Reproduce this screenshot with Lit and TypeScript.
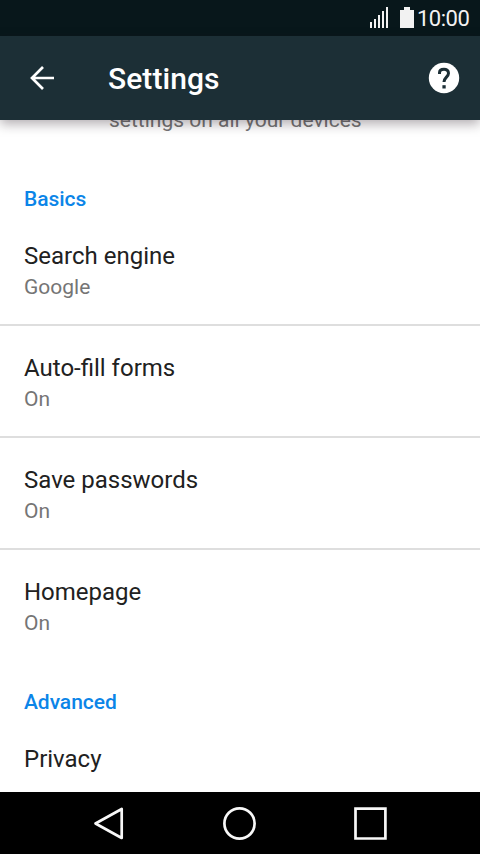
import { LitElement, html, css } from "lit";
import { customElement } from "lit/decorators.js";

interface Entry { title: string; value?: string }

@customElement("app-root")
export class AppRoot extends LitElement {
  static styles = css`
    :host { display: flex; flex-direction: column; width: 480px; height: 854px; overflow: hidden; background: #fff; font-family: Roboto, sans-serif; }
    .status { flex: none; height: 36px; background: #08171b; display: flex; justify-content: flex-end; align-items: center; color: #f2f2f2; font-size: 22px; letter-spacing: -0.5px; box-sizing: border-box; padding: 0 10px 0 0; }
    .clock { width: 53px; }
    .signal { width: 18px; height: 22px; margin-right: 12px; }
    .battery { width: 14px; height: 22px; margin-right: 3px; }
    .bar { flex: none; height: 84px; background: #1c2f36; display: flex; align-items: center; box-shadow: 0 4px 11px rgba(30,15,25,.34); position: relative; z-index: 1; color: #fff; }
    .back { width: 36px; height: 36px; margin-left: 24px; }
    .title { margin-left: 48px; font-size: 30px; font-weight: 500; flex: 1; letter-spacing: 0.07px; }
    .help { width: 36px; height: 36px; margin-right: 18px; }
    .content { flex: 1; min-height: 0; overflow: hidden; }
    .summary { margin: -14px 0 0 109px; font-size: 21px; line-height: 28px; color: #757575; }
    .heading { color: #0b85e8; font-weight: 500; font-size: 21px; line-height: 28px; padding: 51px 24px 1px; letter-spacing: -0.05px; }
    .heading.next { padding-top: 26px; }
    .row { height: 112px; box-sizing: border-box; padding: 26px 24px 0; border-bottom: 2px solid #dedede; }
    .row.last { border: none; }
    .name { font-size: 24px; line-height: 32px; color: #212121; }
    .value { font-size: 21px; line-height: 28px; margin-top: 1px; color: #757575; }
    .nav { flex: none; height: 62px; background: #000; }
    svg { display: block; flex: none; }
  `;

  entries: Entry[] = [
    { title: "Search engine", value: "Google" },
    { title: "Auto-fill forms", value: "On" },
    { title: "Save passwords", value: "On" },
    { title: "Homepage", value: "On" },
  ];

  row(e: Entry, last: boolean) {
    return html`<div class="row ${last ? "last" : ""}"><div class="name">${e.title}</div>${e.value ? html`<div class="value">${e.value}</div>` : ""}</div>`;
  }

  render() {
    return html`
      <div class="status">
        <svg class="signal" viewBox="0 0 18 22" fill="#f2f2f2"><path d="M0 15h2v6H0zM4 12h2v9H4zM8 8h2v13H8zM12 4h2v17h-2zM16 0h2v21h-2z"/></svg>
        <svg class="battery" viewBox="0 0 14 22" fill="#f2f2f2"><path d="M4 0h6v3h4v18H0V3h4z"/></svg>
        <span class="clock">10:00</span>
      </div>
      <div class="bar">
        <svg class="back" viewBox="0 0 36 36" fill="none" stroke="#fff" stroke-width="2.700"><path d="M30 18H8M19 7L8 18l11 11"/></svg>
        <div class="title">Settings</div>
        <svg class="help" viewBox="0 0 36 36"><circle cx="18" cy="18" r="15.200" fill="#fff"/><path d="M13.500 14v-1.200c0-2.300 2-3.600 4.500-3.600s4.500 1.500 4.500 4c0 3.700-4.500 4.300-4.500 8.800" fill="none" stroke="#1c2f36" stroke-width="3"/><path d="M16.400 25.200h3.300v3.300h-3.300z" fill="#1c2f36"/></svg>
      </div>
      <div class="content">
        <div class="summary">settings on all your devices</div>
        <div class="heading">Basics</div>
        ${this.entries.map((e, i) => this.row(e, i === this.entries.length - 1))}
        <div class="heading next">Advanced</div>
        ${this.row({ title: "Privacy" }, true)}
      </div>
      <svg class="nav" viewBox="0 0 480 62" fill="none" stroke="#f8f8f8" stroke-width="2.700" stroke-linejoin="round">
        <path d="M121.700 17v29L95.500 31.500z"/><circle cx="239.500" cy="31.500" r="15.100"/><path stroke-linejoin="miter" d="M355.500 16.600h29.900v29.900h-29.900z"/>
      </svg>`;
  }
}
